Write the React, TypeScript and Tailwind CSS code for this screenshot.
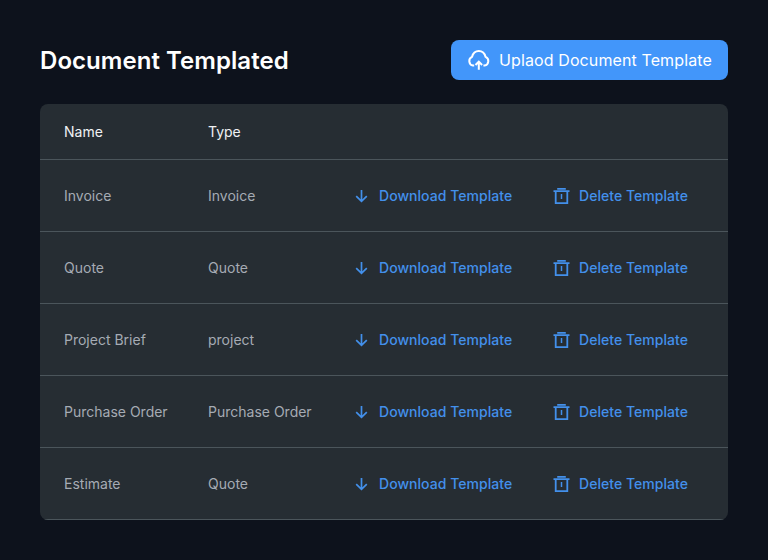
import React from 'react';

type Template = { name: string; type: string };

const templates: Template[] = [
  { name: 'Invoice', type: 'Invoice' },
  { name: 'Quote', type: 'Quote' },
  { name: 'Project Brief', type: 'project' },
  { name: 'Purchase Order', type: 'Purchase Order' },
  { name: 'Estimate', type: 'Quote' },
];

function CloudUploadIcon() {
  return (
    <svg className="size-6 shrink-0" viewBox="0 0 24 24" fill="none" stroke="currentColor" strokeWidth="2">
      <path d="M7.200 17.600H6A4.600 4.600 0 0 1 5 8.900C5.900 5.400 8.500 3 11.800 3s5.900 2.400 6.800 5.900A4.600 4.600 0 0 1 17.600 17.600H16.400" />
      <path d="M11.800 21.800V14M8.500 17L11.800 13.600L15.100 17" />
    </svg>
  );
}

function ArrowDownIcon() {
  return (
    <svg className="size-4 shrink-0" viewBox="0 0 16 16" fill="none" stroke="currentColor" strokeWidth="1.7">
      <path d="M7.500 2V13.300M2.200 8.100L7.500 13.400L12.800 8.100" />
    </svg>
  );
}

function TrashIcon() {
  return (
    <svg className="h-4 w-4 shrink-0 overflow-visible" viewBox="0 0 16 16" fill="none" stroke="currentColor" strokeWidth="1.8">
      <path d="M-.5 3.200H15.500M3.200 .9H11.800M1.700 3.200V15.100H13.300V3.200" />
      <path d="M7.500 6V11" strokeWidth="1.500" />
    </svg>
  );
}

export default function App() {
  return (
    <main className="h-[560px] w-[768px] bg-[#0d121c] px-10 pt-10 font-['Inter',sans-serif]">
      <header className="flex h-10 items-center justify-between">
        <h1 className="pt-0.5 text-2xl font-semibold tracking-[0.05px] text-white">Document Templated</h1>
        <button className="flex h-10 w-[277px] items-center gap-2 rounded-lg bg-[#4296fa] pl-4 text-base tracking-[0.11px] whitespace-nowrap text-white">
          <CloudUploadIcon />
          Uplaod Document Template
        </button>
      </header>
      <section className="mt-6 overflow-hidden rounded-lg bg-[#262d33] text-sm">
        <div className="flex h-14 items-center border-b border-[#4b555b] px-6 text-[#f0f1f3]">
          <span className="w-36">Name</span>
          <span>Type</span>
        </div>
        {templates.map((t) => (
          <div key={t.name} className="flex h-18 items-center border-b border-[#4b555b] pl-6 whitespace-nowrap text-[#a5abb4]">
            <span className="w-36">{t.name}</span>
            <span className="w-[146px]">{t.type}</span>
            <button className="flex w-[200px] items-center gap-[9px] font-medium tracking-[0.04px] text-[#4390eb]">
              <ArrowDownIcon />
              Download Template
            </button>
            <button className="flex items-center gap-[9px] font-medium tracking-[0.04px] text-[#4390eb]">
              <TrashIcon />
              Delete Template
            </button>
          </div>
        ))}
      </section>
    </main>
  );
}
